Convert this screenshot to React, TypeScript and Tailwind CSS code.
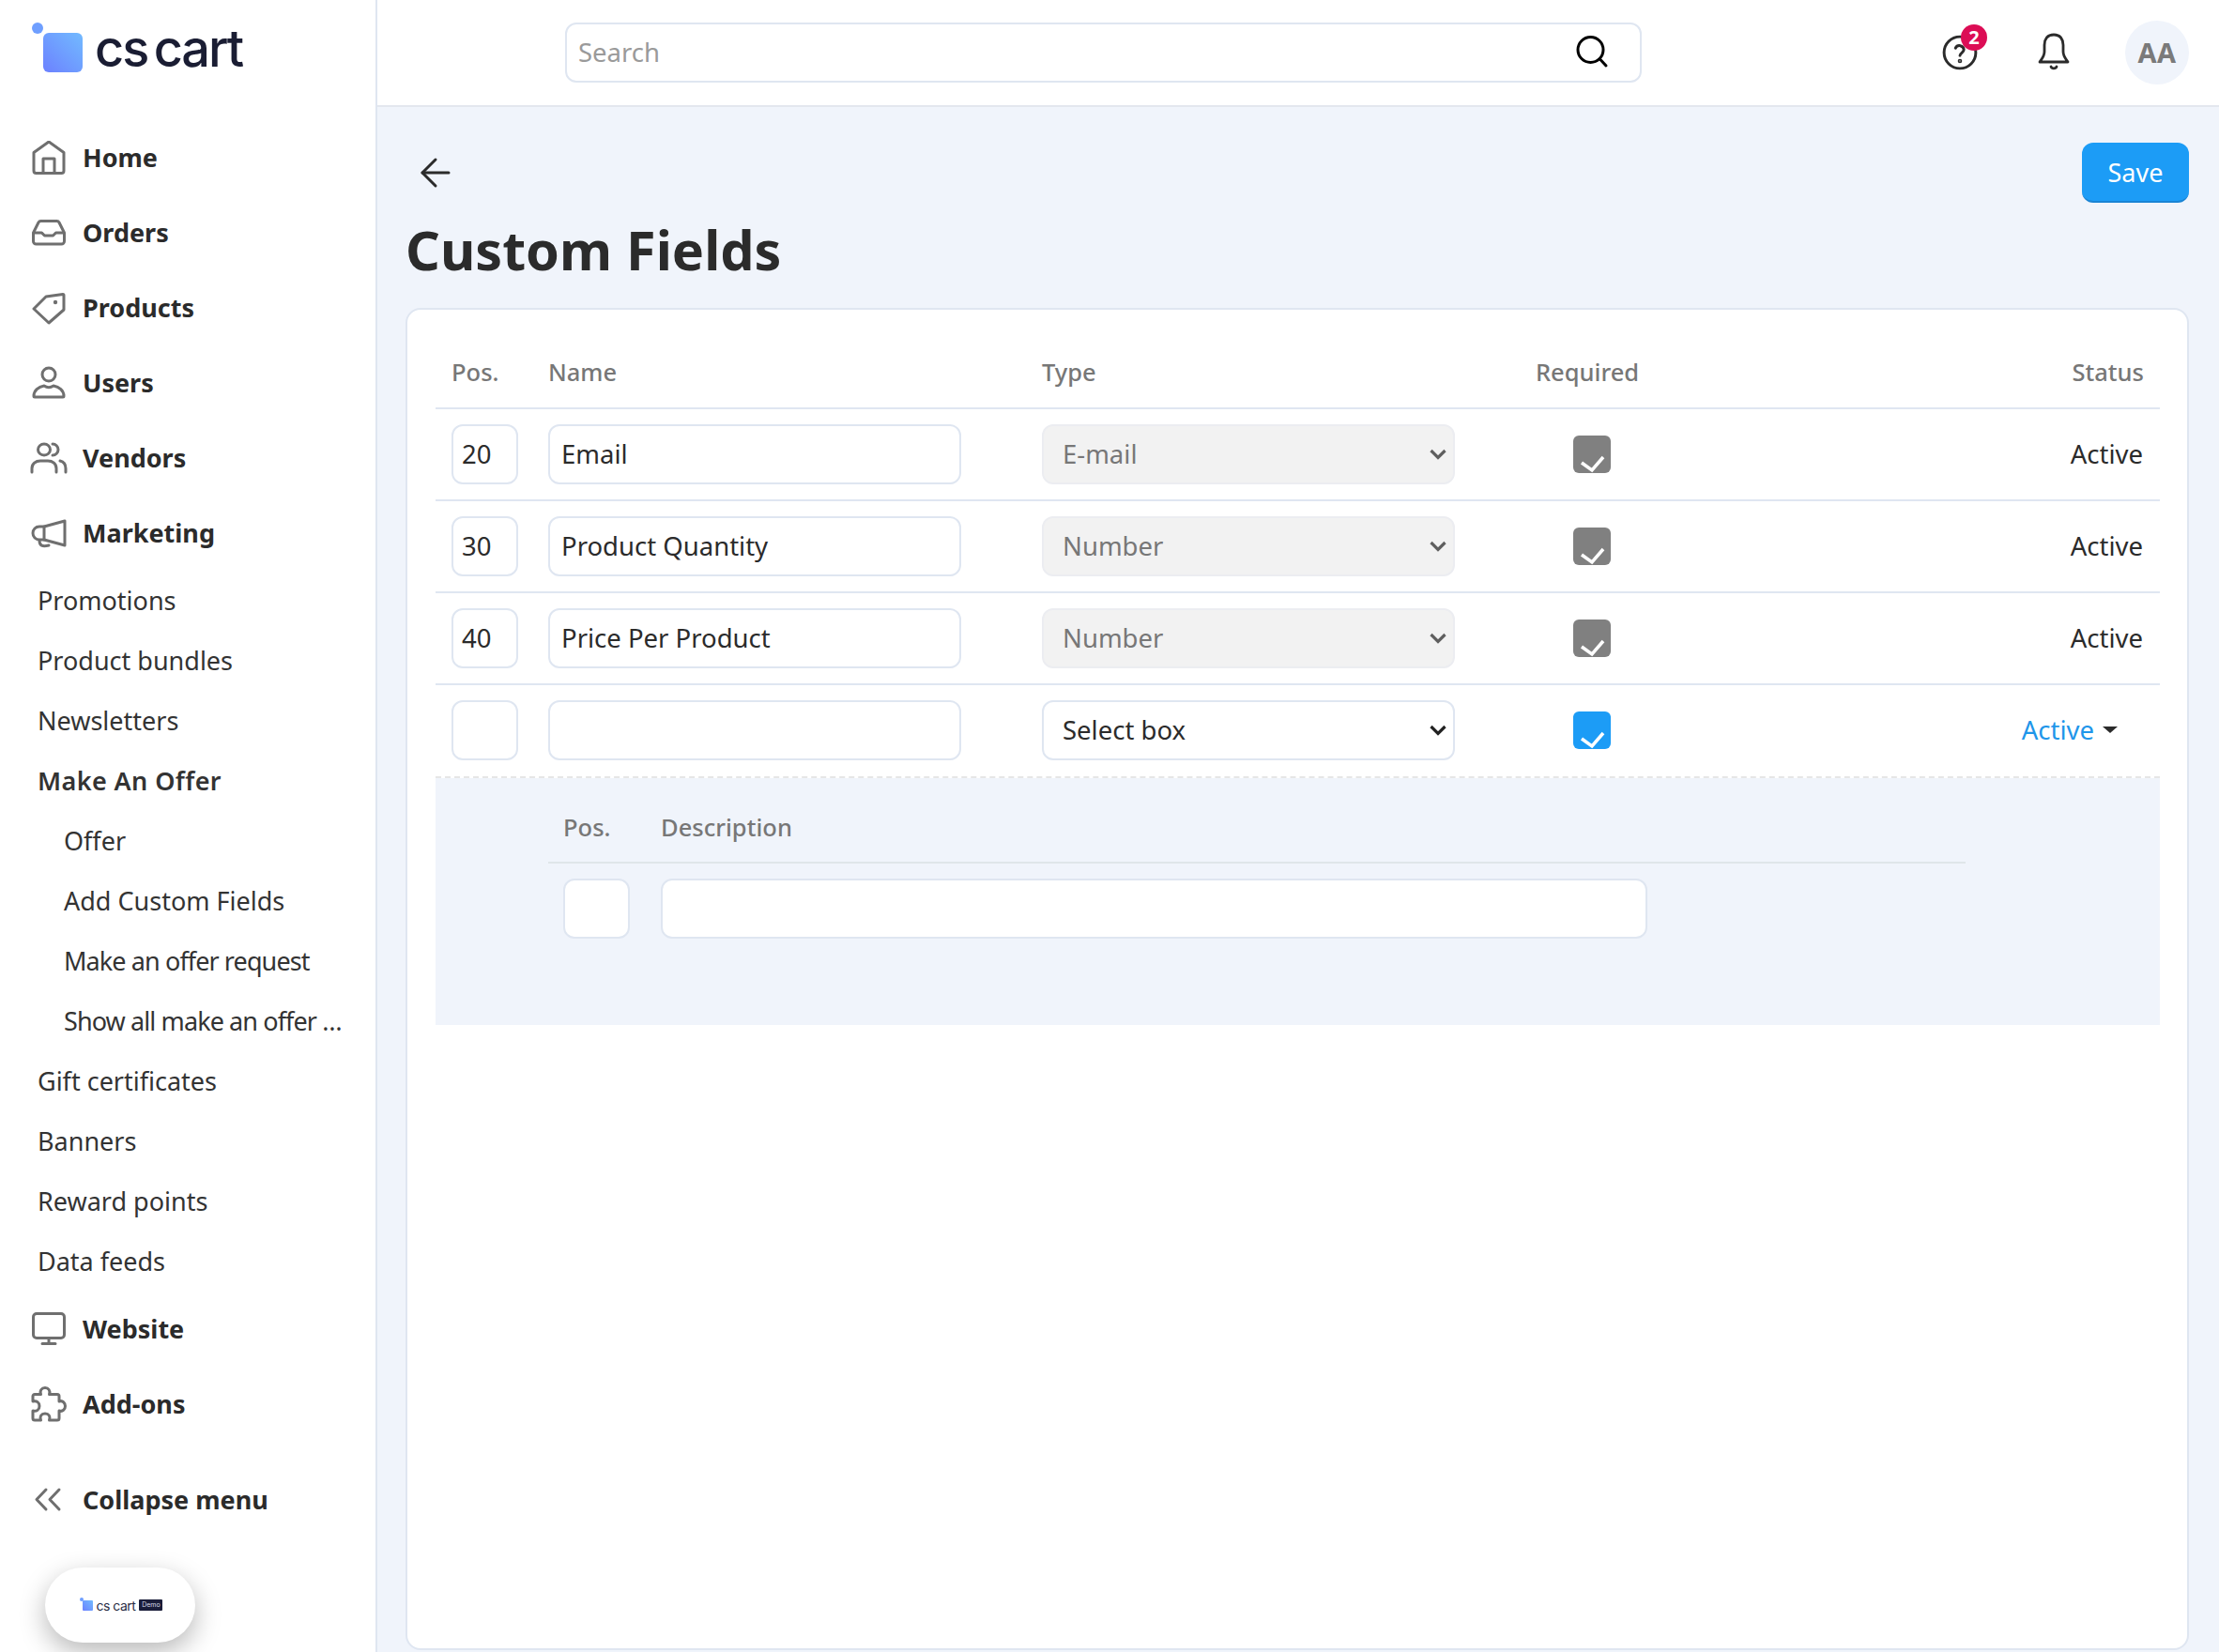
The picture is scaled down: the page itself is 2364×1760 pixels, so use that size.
import { ArrowLeft } from 'lucide-react';

const iconClass = 'h-9 w-9 shrink-0 fill-none stroke-[#6f6f6f] stroke-[3]';

function HomeIcon() {
  return (
    <svg viewBox="0 0 36 36" className={iconClass} strokeLinejoin="round">
      <path d="M18 1 L2 12.500 V32 a2.500 2.500 0 0 0 2.500 2.500 H31.500 a2.500 2.500 0 0 0 2.500-2.500 V12.500 Z" />
      <path d="M12 34 V19 H24 V34" />
    </svg>
  );
}

function OrdersIcon() {
  return (
    <svg viewBox="0 0 36 36" className={iconClass} strokeLinejoin="round">
      <path d="M1.500 18 L7 7 a3 3 0 0 1 2.500-1.500 H26.500 a3 3 0 0 1 2.500 1.500 L34.500 18 V27 a3 3 0 0 1-3 3 H4.500 a3 3 0 0 1-3-3 Z" />
      <path d="M1.500 18 H10.500 L13.500 21 H22.500 L25.500 18 H34.500" />
    </svg>
  );
}

function ProductsIcon() {
  return (
    <svg viewBox="0 0 36 36" className={iconClass} strokeLinejoin="round">
      <path d="M2 19 L15 6 L33 3.500 a1 1 0 0 1 1 1 V20 L18 34 Z" />
      <circle cx="25" cy="12" r="2.200" className="fill-[#6f6f6f] stroke-none" />
    </svg>
  );
}

function UsersIcon() {
  return (
    <svg viewBox="0 0 36 36" className={iconClass} strokeLinejoin="round">
      <circle cx="18" cy="9" r="7" />
      <path d="M3 33 H33 a1 1 0 0 0 1-1 c0-6-5-10-11-11 c-3 2-7 2-10 0 c-6 1-11 5-11 11 a1 1 0 0 0 1 1 Z" />
    </svg>
  );
}

function VendorsIcon() {
  return (
    <svg viewBox="0 0 40 36" className="h-9 w-10 shrink-0 fill-none stroke-[#6f6f6f] stroke-[3]" strokeLinecap="round">
      <ellipse cx="15" cy="9" rx="6.500" ry="6" />
      <path d="M2 33 V29 C2 24 6 21 11 21 H19 C24 21 28 24 28 29 V33" />
      <path d="M24 3 A6 6 0 0 1 24 15" />
      <path d="M32 21 C36 22 38 25 38 29 V33" />
    </svg>
  );
}

function MarketingIcon() {
  return (
    <svg viewBox="0 0 38 36" className="h-9 w-[38px] shrink-0 fill-none stroke-[#6f6f6f] stroke-[3]" strokeLinejoin="round" strokeLinecap="round">
      <path d="M36 5 V31 L14 25 H9 C5 25 2 22 2 18 C2 14 5 11 9 11 H14 Z" />
      <path d="M14 11 V25" />
      <path d="M9 26 C9 31 12 33 19 31" />
    </svg>
  );
}

function WebsiteIcon() {
  return (
    <svg viewBox="0 0 36 36" className={iconClass} strokeLinecap="round">
      <rect x="1.500" y="1.500" width="33" height="26" rx="3.500" />
      <path d="M18 28 V33 M11 33.500 H25" />
    </svg>
  );
}

function AddonsIcon() {
  return (
    <svg viewBox="0 0 38 38" className="h-[38px] w-[38px] shrink-0 fill-none stroke-[#6f6f6f] stroke-[3]" strokeLinejoin="round">
      <path d="M2 10.500 a2 2 0 0 1 2-2 H10.500 C9 4.500 11.500 1.500 15 1.500 S21 4.500 19.500 8.500 H28 a2 2 0 0 1 2 2 V16 C34 14.500 36.500 18 36.500 21 S34 27.500 30 26 V34 a2 2 0 0 1-2 2 H19.500 C21 32 19 29 15 29 S9 32 10.500 36 H4 a2 2 0 0 1-2-2 V26 C6 27 9 25 9 21 S6 15 2 16 Z" />
    </svg>
  );
}

function CollapseIcon() {
  return (
    <svg viewBox="0 0 36 36" className={iconClass} strokeLinecap="round" strokeLinejoin="round">
      <path d="M15 7 L5 17.500 L15 28 M29 7 L19 17.500 L29 28" />
    </svg>
  );
}

function BellIcon() {
  return (
    <svg viewBox="0 0 36 40" className="h-10 w-9 fill-none stroke-[#2b2b2b] stroke-[2.800]" strokeLinejoin="round" strokeLinecap="round">
      <path d="M18 2 C11 2 8 7 8 13 V20 C8 25 5 28 3 31 H33 C31 28 28 25 28 20 V13 C28 7 25 2 18 2 Z" />
      <path d="M15 36 C16 38.500 20 38.500 21 36" />
    </svg>
  );
}

function Check() {
  return (
    <svg viewBox="0 0 40 40" className="h-10 w-10 fill-none stroke-white stroke-[3.500]">
      <path d="M9 29 L20 37 L32 23" />
    </svg>
  );
}

function Chevron({ dim }: { dim: boolean }) {
  return (
    <svg viewBox="0 0 20 20" className={`pointer-events-none absolute right-[8px] top-[22px] h-5 w-5 fill-none stroke-[3.200] ${dim ? 'stroke-[#5f5f5f]' : 'stroke-[#222222]'}`}>
      <path d="M2.500 6 L10 13.500 L17.500 6" />
    </svg>
  );
}

function LogoMark({ small }: { small?: boolean }) {
  if (small) {
    return (
      <div className="relative mr-[4px] h-[11px] w-[11px] rounded-[1px] bg-gradient-to-tr from-[#6c80ff] to-[#72baff]">
        <span className="absolute left-[-3px] top-[-3px] h-[4px] w-[4px] rounded-full bg-[#6f9fff]" />
      </div>
    );
  }
  return (
    <div className="relative h-[42px] w-[42px] rounded-[6px] bg-gradient-to-tr from-[#6c80ff] to-[#72baff]">
      <span className="absolute left-[-12px] top-[-11px] h-[12px] w-[12px] rounded-full bg-[#6f9fff]" />
    </div>
  );
}

function Field({ value, width, pos }: { value?: string; width: string; pos?: boolean }) {
  return (
    <input
      readOnly
      value={value ?? ''}
      className={`h-[64px] ${width} rounded-[12px] border-2 border-[#dfe6f1] bg-white pb-[2px] ${pos ? 'px-[9px]' : 'px-[12px]'} text-[27.500px] text-[#2b2b2b] outline-none`}
    />
  );
}

function TypeSelect({ value, disabled }: { value: string; disabled: boolean }) {
  return (
    <div className="relative h-[64px] w-[440px]">
      <select
        disabled={disabled}
        defaultValue={value}
        className={`h-full w-full appearance-none rounded-[12px] border-2 px-[20px] text-[27.500px] outline-none ${
          disabled
            ? 'border-[#ecedf1] bg-[#f2f2f2] text-[#777777]'
            : 'border-[#dfe6f1] bg-white text-[#2b2b2b]'
        }`}
      >
        <option>{value}</option>
      </select>
      <Chevron dim={disabled} />
    </div>
  );
}

const rows = [
  { pos: '20', name: 'Email', type: 'E-mail' },
  { pos: '30', name: 'Product Quantity', type: 'Number' },
  { pos: '40', name: 'Price Per Product', type: 'Number' },
];

const topNav = [
  { label: 'Home', icon: <HomeIcon /> },
  { label: 'Orders', icon: <OrdersIcon /> },
  { label: 'Products', icon: <ProductsIcon /> },
  { label: 'Users', icon: <UsersIcon /> },
  { label: 'Vendors', icon: <VendorsIcon /> },
  { label: 'Marketing', icon: <MarketingIcon /> },
];

function NavItem({ label, icon }: { label: string; icon: React.ReactNode }) {
  return (
    <div className="flex h-[80px] items-center text-[27px] font-bold text-[#2b2b2b]">
      <span className="flex w-[88px] justify-center pl-[17px] pr-[1px]">{icon}</span>
      <span>{label}</span>
    </div>
  );
}

function SubItem({ label, nested, bold, tight }: { label: string; nested?: boolean; bold?: boolean; tight?: boolean }) {
  return (
    <div
      className={`flex h-[64px] items-center text-[27px] text-[#333333] ${nested ? 'pl-[68px]' : 'pl-[40px]'} ${
        bold ? 'font-semibold tracking-[0.4px]' : ''
      } ${tight ? 'tracking-[-0.9px]' : ''}`}
    >
      {label}
    </div>
  );
}

export default function App() {
  return (
    <div className="flex h-[1760px] w-[2364px] overflow-hidden bg-white font-['Noto_Sans',sans-serif] text-[#2b2b2b]">
      <aside className="w-[402px] shrink-0 border-r-2 border-[#dfe6f1] bg-white">
        <div className="flex h-[128px] items-start pl-[46px] pt-[35px]">
          <LogoMark />
          <span className="ml-[13px] mt-[-13px] font-['Inter',sans-serif] text-[54px] font-medium leading-[60px] tracking-[-2px] text-[#1a1d33] [word-spacing:-6px]">
            cs cart
          </span>
        </div>

        {topNav.map((n) => (
          <NavItem key={n.label} label={n.label} icon={n.icon} />
        ))}
        <SubItem label="Promotions" />
        <SubItem label="Product bundles" />
        <SubItem label="Newsletters" />
        <SubItem label="Make An Offer" bold />
        <SubItem label="Offer" nested />
        <SubItem label="Add Custom Fields" nested />
        <SubItem label="Make an offer request" nested tight />
        <SubItem label="Show all make an offer …" nested tight />
        <SubItem label="Gift certificates" />
        <SubItem label="Banners" />
        <SubItem label="Reward points" />
        <SubItem label="Data feeds" />
        <NavItem label="Website" icon={<WebsiteIcon />} />
        <NavItem label="Add-ons" icon={<AddonsIcon />} />
        <div className="mt-[22px]">
          <NavItem label="Collapse menu" icon={<CollapseIcon />} />
        </div>

        <div className="ml-[48px] mt-[32px] flex h-[80px] w-[160px] items-center justify-center rounded-full bg-white pl-[5px] shadow-[0_10px_28px_rgba(0,0,0,0.28)]">
          <LogoMark small />
          <span className="font-['Inter',sans-serif] text-[14px] tracking-[-0.5px] text-[#2a2d45]">cs cart</span>
          <span className="ml-[4px] flex h-[12px] w-[25px] items-center justify-center rounded-[1px] bg-[#1a1d3a] font-['Inter',sans-serif] text-[7px] text-[#d8dbe8]">
            Demo
          </span>
        </div>
      </aside>

      <div className="flex min-w-0 flex-1 flex-col bg-[#f0f4fb]">
        <header className="flex h-[114px] shrink-0 items-start border-b-2 border-[#e3e7ee] bg-white pl-[200px] pt-[24px]">
          <div className="relative h-[64px] w-[1147px] rounded-[12px] border-2 border-[#dfe6f1] bg-white">
            <input
              placeholder="Search"
              className="h-full w-full bg-transparent px-[12px] pb-[1px] text-[27.500px] outline-none placeholder:text-[#9a9a9a]"
            />
            <svg viewBox="0 0 36 36" className="absolute right-[33px] top-[11px] h-9 w-9 fill-none stroke-black stroke-[3]" strokeLinecap="round">
              <circle cx="16.500" cy="16" r="13.500" />
              <path d="M26.500 26 L33 33" />
            </svg>
          </div>

          <div className="relative ml-[320px] mt-[13px] h-[40px] w-[40px]">
            <svg viewBox="0 0 36 36" className="h-[38px] w-[38px] fill-none stroke-[#2b2b2b] stroke-[2.800]" strokeLinecap="round">
              <circle cx="18" cy="18" r="16" />
              <path d="M13.500 13.500 a4.500 4.500 0 0 1 8.500 1.500 c0 3-4 3.500-4 6" />
              <circle cx="18" cy="26.500" r="0.800" />
            </svg>
            <span className="absolute left-[20px] top-[-11px] flex h-[28px] w-[28px] items-center justify-center rounded-full bg-[#dc0d55] text-[20px] font-bold text-white">
              2
            </span>
          </div>

          <div className="ml-[61px] mt-[11px]">
            <BellIcon />
          </div>

          <div className="ml-[58px] mt-[-2px] flex h-[68px] w-[68px] items-center justify-center rounded-full bg-[#f0f4fb] text-[29px] font-bold tracking-[0.5px] text-[#7a7a7a]">
            AA
          </div>
        </header>

        <main className="flex min-h-0 flex-1 flex-col pl-[30px] pr-[32px]">
          <div className="mt-[38px] flex h-[64px] shrink-0 items-center justify-between pl-[8px]">
            <ArrowLeft size={48} strokeWidth={1.5} className="text-[#2b2b2b]" />
            <button className="h-[64px] w-[114px] rounded-[12px] border-b-2 border-[#1a84d4] bg-[#1c9cf6] pt-[2px] text-[27px] text-white">
              Save
            </button>
          </div>

          <h1 className="mt-[15px] h-[70px] shrink-0 text-[57.500px] font-bold leading-[70px] text-[#2b2b2b]">Custom Fields</h1>

          <section className="mb-[2px] mt-[27px] min-h-0 flex-1 rounded-[16px] border-2 border-[#dfe6f1] bg-white pl-[30px] pr-[29px] pt-[30px]">
            <div className="flex h-[76px] items-center border-b-2 border-[#dfe6f1] pb-[2px] pl-[17px] pr-[17px] text-[25.500px] font-medium text-[#777777]">
              <div className="mr-[32px] w-[71px]">Pos.</div>
              <div className="mr-[86px] w-[440px]">Name</div>
              <div className="mr-[86px] w-[440px]">Type</div>
              <div>Required</div>
              <div className="ml-auto">Status</div>
            </div>

            {rows.map((r) => (
              <div key={r.pos} className="flex h-[98px] items-center border-b-2 border-[#dfe6f1] pl-[17px] pr-[18px]">
                <div className="mr-[32px]">
                  <Field value={r.pos} width="w-[71px]" pos />
                </div>
                <div className="mr-[86px]">
                  <Field value={r.name} width="w-[440px]" />
                </div>
                <TypeSelect value={r.type} disabled />
                <div className="ml-[126px] h-[40px] w-[40px] overflow-hidden rounded-[6px] bg-[#808080]">
                  <Check />
                </div>
                <div className="ml-auto text-[27.500px] text-[#2b2b2b]">Active</div>
              </div>
            ))}

            <div className="flex h-[99px] items-center border-b-2 border-dashed border-[#e6e6e6] pb-[2px] pl-[17px] pr-[45px]">
              <div className="mr-[32px]">
                <Field width="w-[71px]" />
              </div>
              <div className="mr-[86px]">
                <Field width="w-[440px]" />
              </div>
              <TypeSelect value="Select box" disabled={false} />
              <div className="ml-[126px] h-[40px] w-[40px] overflow-hidden rounded-[6px] bg-[#1c9cf6]">
                <Check />
              </div>
              <div className="ml-auto flex items-center text-[27.500px] text-[#1f96ea]">
                Active
                <span className="ml-[9px] h-0 w-0 border-x-[8px] border-t-[7px] border-x-transparent border-t-[#2b2b2b]" />
              </div>
            </div>

            <div className="h-[263px] bg-[#f0f4fb] pl-[120px] pr-[207px] pt-[17px]">
              <div className="flex h-[74px] items-center border-b-2 border-[#dfe6e9] pb-[2px] pl-[16px] text-[25.500px] font-medium text-[#777777]">
                <div className="mr-[33px] w-[71px]">Pos.</div>
                <div>Description</div>
              </div>
              <div className="mt-[16px] flex pl-[16px]">
                <div className="mr-[33px]">
                  <Field width="w-[71px]" />
                </div>
                <Field width="w-[1051px]" />
              </div>
            </div>
          </section>
        </main>
      </div>
    </div>
  );
}
